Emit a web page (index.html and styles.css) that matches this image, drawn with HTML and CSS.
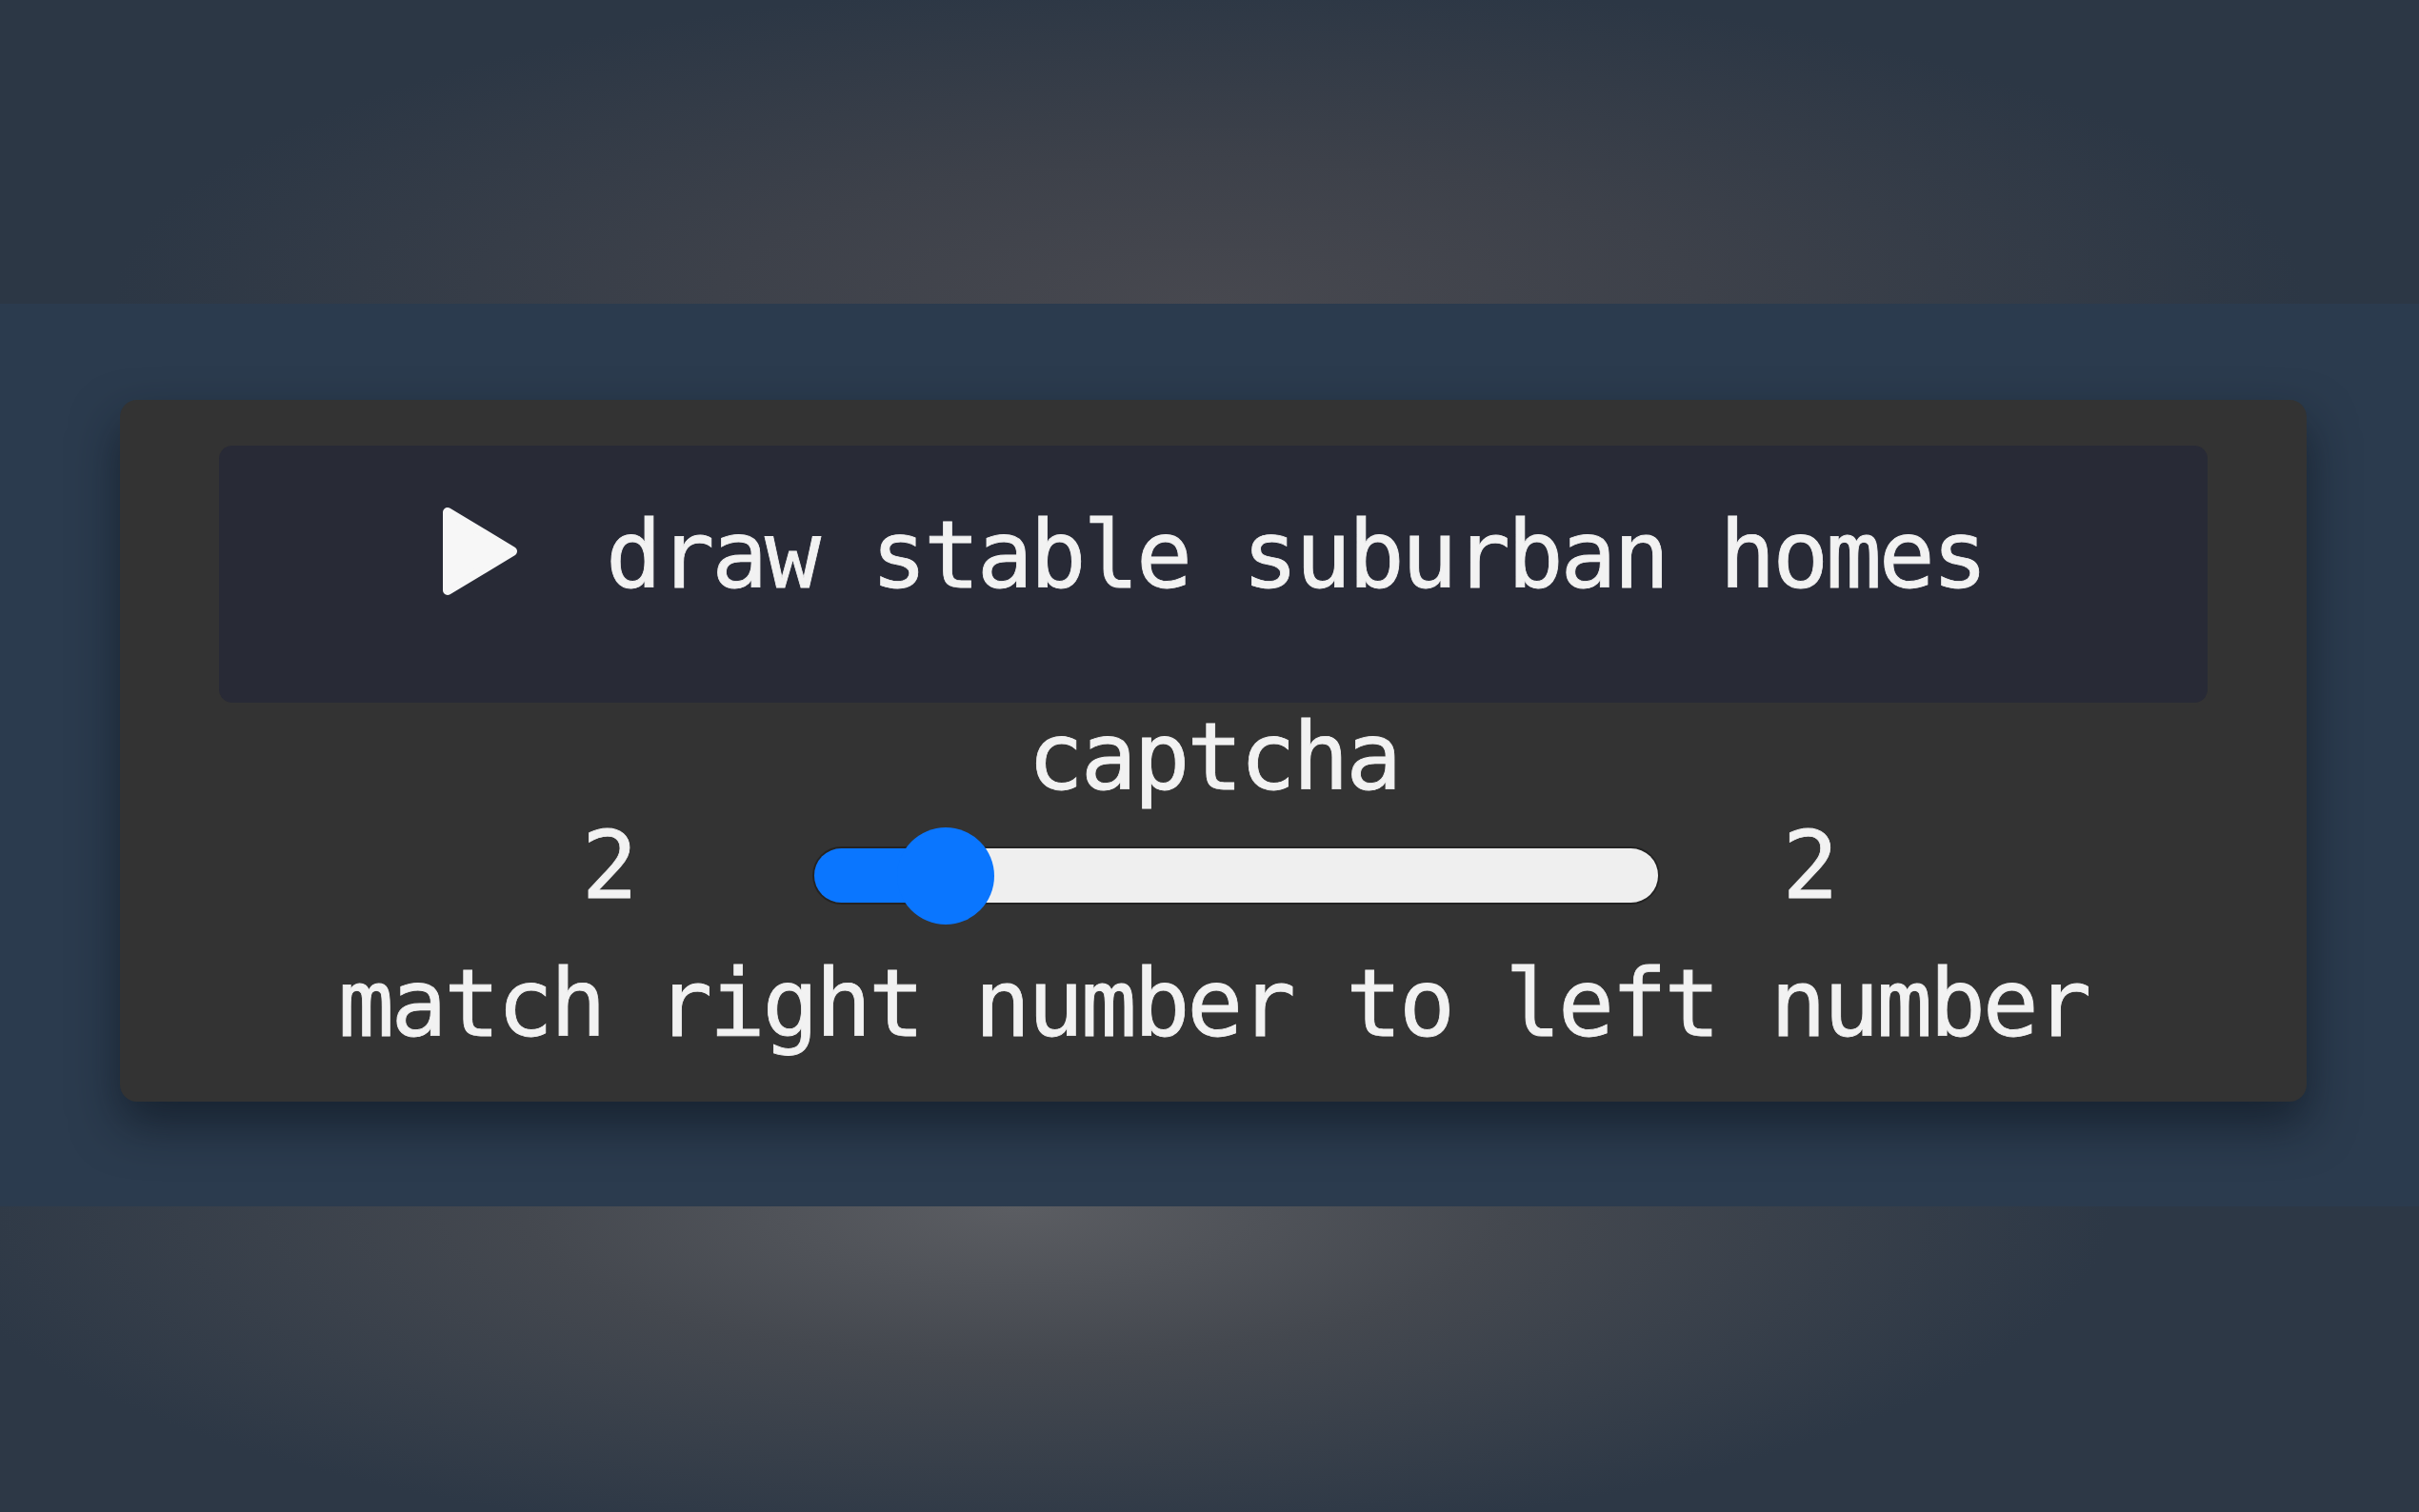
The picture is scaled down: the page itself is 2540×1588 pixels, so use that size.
FILE: index.html
```html
<!DOCTYPE html>
<html lang="en">
<head>
<meta charset="utf-8">
<title>captcha</title>
<link rel="stylesheet" href="styles.css">
</head>
<body>
<header class="band band-top"></header>
<main class="stage">
  <section class="card">
    <div class="prompt">
      <svg class="play" viewBox="0 0 80 94" width="80" height="94" aria-hidden="true">
        <polygon points="6,6 74,47 6,88" fill="#f7f7f7" stroke="#f7f7f7" stroke-width="10" stroke-linejoin="round"/>
      </svg>
      <span class="prompt-text">draw stable suburban homes</span>
    </div>
    <div class="captcha-title">captcha</div>
    <div class="slider-row">
      <span class="num">2</span>
      <input class="slider" type="range" min="1" max="10" value="2" aria-label="captcha">
      <span class="num">2</span>
    </div>
    <p class="hint">match right number to left number</p>
  </section>
</main>
<footer class="band band-bottom"></footer>
</body>
</html>
```

FILE: styles.css
```css
html, body {
  margin: 0;
  padding: 0;
  height: 100%;
}

body {
  display: flex;
  flex-direction: column;
  background: #2d3846;
  font-family: "DejaVu Sans Mono", "Liberation Mono", monospace;
  color: #f2f2f2;
}

.band-top {
  height: 319px;
  flex: none;
  background: radial-gradient(ellipse 1150px 340px at 50% 100%, #47484f 0%, #3d414a 45%, #2c3745 100%);
}

.band-bottom {
  flex: 1;
  background: radial-gradient(ellipse 1150px 360px at 42% 0%, #5b5d62 0%, #44484f 45%, #2d3846 100%);
}

.stage {
  flex: none;
  background: #2b3b4e;
  padding: 101px 118px 110px 126px;
}

.card {
  background: #333333;
  border-radius: 18px;
  padding: 48px 104px 46px;
  box-shadow: 0 24px 50px rgba(10, 18, 28, 0.6);
  display: flex;
  flex-direction: column;
  align-items: stretch;
}

.prompt {
  background: #282a36;
  border-radius: 14px;
  padding: 58px 20px 98px;
  display: flex;
  justify-content: center;
  align-items: flex-start;
  gap: 92px;
}

.play {
  display: block;
  flex: none;
  margin-top: 6px;
}

.prompt-text,
.captcha-title,
.num,
.hint {
  font-size: 98px;
  letter-spacing: -3.3px;
  line-height: normal;
  white-space: pre;
  -webkit-text-stroke: 0.8px currentColor;
}

.captcha-title {
  text-align: center;
}

.slider-row {
  display: flex;
  justify-content: center;
  align-items: flex-start;
  padding-right: 10px;
}

.num {
  display: block;
}

.slider {
  -webkit-appearance: none;
  appearance: none;
  display: block;
  width: 886px;
  height: 57px;
  margin: 39px 131px 0 188px;
  padding: 0;
  background: transparent;
}

.slider::-webkit-slider-runnable-track {
  height: 57px;
  border-radius: 29px;
  background: linear-gradient(to right, #0a76ff 0%, #0a76ff 15.7%, #efefef 15.7%, #efefef 100%);
  box-shadow: 0 0 0 2px rgba(0, 0, 0, 0.3);
}

.slider::-webkit-slider-thumb {
  -webkit-appearance: none;
  appearance: none;
  width: 102px;
  height: 102px;
  margin-top: -22.5px;
  border: none;
  border-radius: 50%;
  background: #0a76ff;
}

.hint {
  margin: 31px 0 0;
  text-align: center;
}
```
